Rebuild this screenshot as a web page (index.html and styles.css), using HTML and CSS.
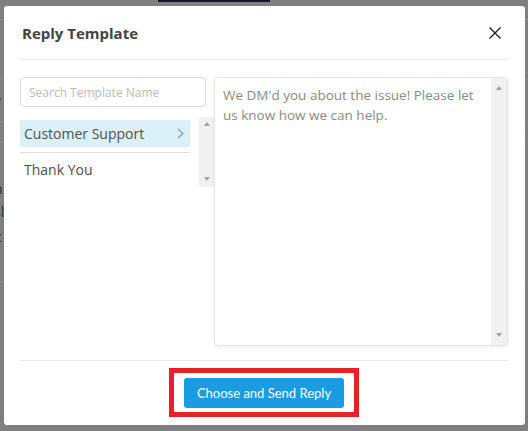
FILE: index.html
```html
<!DOCTYPE html>
<html>
<head>
<meta charset="utf-8">
<link rel="stylesheet" href="styles.css">
</head>
<body>
<div class="page">
  <div class="page-top"><span class="tab-line"></span></div>
  <div class="page-row h40"></div>
  <div class="page-row h43"><span class="frag">/</span></div>
  <div class="page-row h19"></div>
  <div class="page-row h141">
    <span class="frag f1">n</span>
    <span class="frag f2">sl</span>
    <span class="frag f3">c</span>
  </div>
</div>

<div class="modal">
  <div class="modal-header">
    <h2 class="title">Reply Template</h2>
    <button class="close" aria-label="Close">
      <svg width="12" height="12" viewBox="0 0 12 12"><path d="M0.5 0.5 L11.5 11.5 M11.5 0.5 L0.5 11.5" stroke="#222" stroke-width="1.4" fill="none"/></svg>
    </button>
  </div>
  <div class="modal-body">
    <div class="left">
      <input class="search" type="text" placeholder="Search Template Name">
      <div class="list-wrap">
        <ul class="list">
          <li class="item active"><span class="item-inner">Customer Support
            <svg class="chev" width="7" height="11" viewBox="0 0 7 11"><path d="M1 0.8 L6 5.5 L1 10.2" stroke="#6a9bbd" stroke-width="1.1" fill="none"/></svg></span></li>
          <li class="item"><span class="item-inner">Thank You</span></li>
        </ul>
        <div class="vscroll short">
          <span class="arrow up"></span>
          <span class="arrow down"></span>
        </div>
      </div>
    </div>
    <div class="editor">
      <div class="editor-text">We DM'd you about the issue! Please let us know how we can help.</div>
      <div class="vscroll tall">
        <span class="arrow up"></span>
        <span class="arrow down"></span>
      </div>
    </div>
  </div>
  <div class="modal-footer">
    <div class="highlight">
      <button class="send">Choose and Send Reply</button>
    </div>
  </div>
</div>
</body>
</html>
```
FILE: styles.css
```css
* { box-sizing: border-box; }
html, body { margin: 0; padding: 0; }
body {
  width: 528px;
  height: 431px;
  overflow: hidden;
  background: #7f7f7f;
  font-family: "Open Sans", "Noto Sans", sans-serif;
  position: relative;
}
.page { width: 528px; }
.page-top { height: 20px; border-bottom: 1px solid #8c8c8c; }
.tab-line { display: block; margin-left: 158px; width: 112px; height: 2px; background: #14182c; }
.page-row { border-bottom: 1px solid #8c8c8c; position: relative; }
.h40 { height: 60px; }
.h43 { height: 43px; }
.h19 { height: 19px; }
.h141 { height: 141px; }
.frag { position: absolute; left: -2px; font-size: 14px; color: #303030; }
.h43 .frag { top: 13px; left: -4px; }
.f1 { top: 37px; left: -6px; }
.f2 { top: 60px; left: -6px; }
.f3 { top: 85px; left: -5px; }

.modal {
  position: absolute;
  left: 4px;
  top: 6px;
  width: 521px;
  height: 419px;
  background: #fff;
  border-radius: 3px;
  padding: 0 17px 0 16px;
  display: flex;
  flex-direction: column;
}
.modal-header {
  height: 54px;
  border-bottom: 1px solid #e9e9e9;
  display: flex;
  align-items: center;
  justify-content: space-between;
  padding: 0 0 0 2px;
}
.title {
  margin: 0;
  font-size: 15px;
  font-weight: 700;
  color: #444;
}
.close {
  border: 0;
  background: none;
  padding: 0;
  margin-right: 7px;
  width: 12px;
  height: 12px;
  display: flex;
}
.modal-body {
  flex: 1;
  display: flex;
  padding: 17px 0 14px;
  border-bottom: 1px solid #e9e9e9;
}
.left { width: 194px; display: flex; flex-direction: column; }
.search {
  width: 186px;
  height: 30px;
  border: 1px solid #dcdcdc;
  border-radius: 4px;
  padding: 0 8px;
  font-family: inherit;
  font-size: 12px;
  color: #555;
  outline: none;
}
.search::placeholder { color: #bdbdbd; }
.list-wrap { display: flex; margin-top: 10px; align-items: flex-start; }
.list { list-style: none; margin: 3px 0 0; padding: 0; width: 170px; }
.item {
  border-bottom: 1px solid #dedede;
  padding-bottom: 5px;
}
.item + .item { border-bottom: 0; padding-top: 3px; }
.item-inner {
  display: flex;
  align-items: center;
  justify-content: space-between;
  height: 27px;
  padding: 0 6px 0 4px;
  font-size: 14px;
  color: #505050;
}
.active .item-inner { background: #dcf0fa; }
.vscroll {
  background: #f1f1f1;
  width: 15px;
  display: flex;
  flex-direction: column;
  justify-content: space-between;
  align-items: center;
}
.short { height: 70px; margin-left: 9px; padding: 5px 0 6px; }
.arrow {
  width: 0; height: 0;
  border-left: 3.5px solid transparent;
  border-right: 3.5px solid transparent;
}
.arrow.up { border-bottom: 4px solid #a3a3a3; }
.arrow.down { border-top: 4px solid #a3a3a3; }
.editor {
  width: 294px;
  height: 269px;
  border: 1px solid #e6e6e6;
  border-radius: 4px;
  box-shadow: 0 1px 3px rgba(0,0,0,0.08);
  display: flex;
}
.editor-text {
  flex: 1;
  padding: 7px 8px;
  font-size: 13.5px;
  line-height: 20px;
  color: #8a8a8a;
}
.tall { width: 16px; height: 100%; padding: 8px 0 8px; border-radius: 0 4px 4px 0; }
.modal-footer {
  height: 64px;
  display: flex;
  justify-content: center;
  padding-top: 7px;
}
.highlight {
  width: 190px;
  height: 49px;
  border: 5px solid #e8202a;
  display: flex;
  align-items: center;
  justify-content: center;
}
.send {
  width: 160px;
  height: 30px;
  border: 0;
  border-radius: 3px;
  background: #1b9ce0;
  color: #fff;
  font-family: Lato, "Open Sans", sans-serif;
  font-size: 13px;
}
```
